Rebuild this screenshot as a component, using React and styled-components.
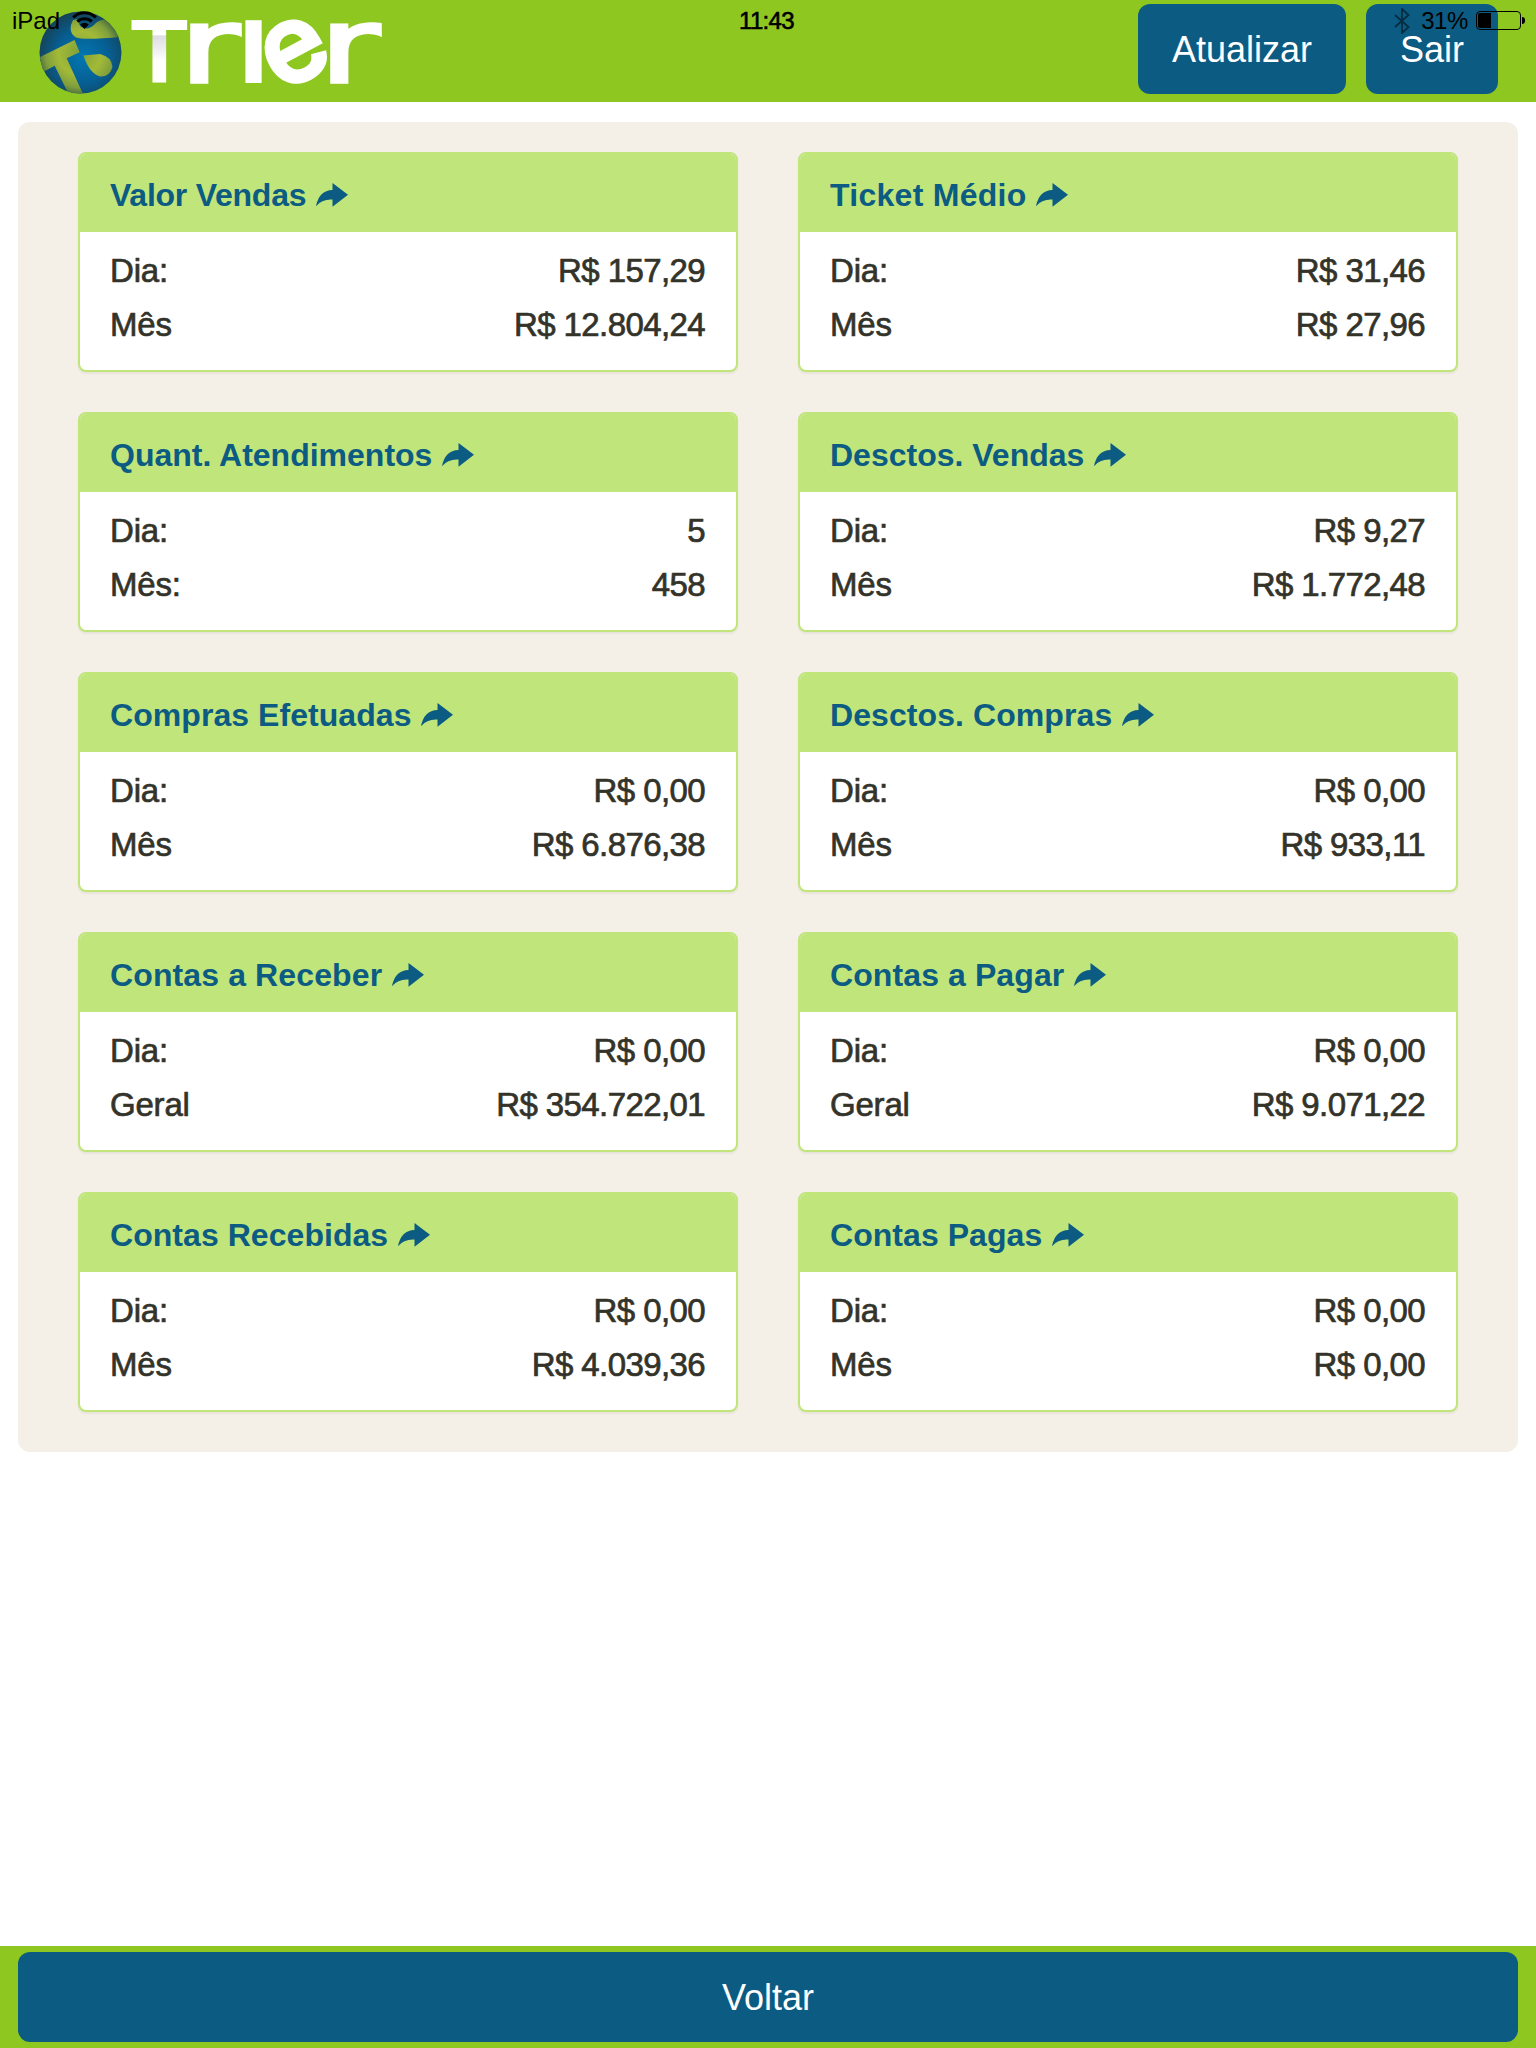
import React from "react";
import styled, { createGlobalStyle } from "styled-components";

const cards = [
  { title: "Valor Vendas", spacing: "-0.25px", rows: [["Dia:", "R$ 157,29"], ["Mês", "R$ 12.804,24"]] },
  { title: "Ticket Médio", spacing: "0.28px", rows: [["Dia:", "R$ 31,46"], ["Mês", "R$ 27,96"]] },
  { title: "Quant. Atendimentos", rows: [["Dia:", "5"], ["Mês:", "458"]] },
  { title: "Desctos. Vendas", rows: [["Dia:", "R$ 9,27"], ["Mês", "R$ 1.772,48"]] },
  { title: "Compras Efetuadas", spacing: "0.06px", rows: [["Dia:", "R$ 0,00"], ["Mês", "R$ 6.876,38"]] },
  { title: "Desctos. Compras", spacing: "0.08px", rows: [["Dia:", "R$ 0,00"], ["Mês", "R$ 933,11"]] },
  { title: "Contas a Receber", spacing: "0.12px", rows: [["Dia:", "R$ 0,00"], ["Geral", "R$ 354.722,01"]] },
  { title: "Contas a Pagar", spacing: "0.1px", rows: [["Dia:", "R$ 0,00"], ["Geral", "R$ 9.071,22"]] },
  { title: "Contas Recebidas", spacing: "0.05px", rows: [["Dia:", "R$ 0,00"], ["Mês", "R$ 4.039,36"]] },
  { title: "Contas Pagas", spacing: "0.05px", rows: [["Dia:", "R$ 0,00"], ["Mês", "R$ 0,00"]] },
];

const Logo = () => (
  <LogoSvg viewBox="0 0 350 90" aria-label="Trier">
    <defs>
      <radialGradient id="sea" cx="0.5" cy="0.58" r="0.54">
        <stop offset="0" stopColor="#0277b0" />
        <stop offset="0.55" stopColor="#065e92" />
        <stop offset="1" stopColor="#173f50" />
      </radialGradient>
      <radialGradient id="land" gradientUnits="userSpaceOnUse" cx="42" cy="48" r="43">
        <stop offset="0" stopColor="#7f9f38" />
        <stop offset="0.5" stopColor="#a3ba38" />
        <stop offset="0.8" stopColor="#809f3c" />
        <stop offset="1" stopColor="#45683f" />
      </radialGradient>
      <linearGradient id="fold" gradientUnits="userSpaceOnUse" x1="0" y1="-63" x2="0" y2="0">
        <stop offset="0.24" stopColor="#ffffff" />
        <stop offset="0.25" stopColor="#dcdce2" />
        <stop offset="0.65" stopColor="#ffffff" />
      </linearGradient>
      <clipPath id="globe">
        <circle cx="42.5" cy="47.5" r="41" />
      </clipPath>
    </defs>
    <g clipPath="url(#globe)">
      <rect width="90" height="90" fill="url(#sea)" />
      <g fill="url(#land)">
        <path d="M0 53 36.5 35 41.7 47.3 28.7 53.3 45.5 90H31L16.7 60.7 5 67z" />
        <path d="M45.5 50.5 62 49Q74 52 74.5 62Q72 72 62 71.5Q51 68 45.5 50.5z" />
        <path d="M35 15Q29 27 38 32.5Q46 35.5 86 31.5L78 14Q64 13 58 18Q52 25 46 23Q40 22 41 14z" />
      </g>
    </g>
    <LogoLetter $fill="url(#fold)" fontSize="91.6" transform="translate(92.5 78) scale(1.03 1)">
      T
    </LogoLetter>
    <ArchLetter fontSize="104" transform="translate(141.5 77) scale(1.4 1)">r</ArchLetter>
    <LogoLetter fontSize="91.6" transform="translate(200 78) scale(1.22 1)">I</LogoLetter>
    <RoundLetter fontSize="107" textAnchor="middle" transform="translate(256.5 46.5) rotate(-28) translate(0 29.5)">
      e
    </RoundLetter>
    <ArchLetter fontSize="104" transform="translate(281.5 77) scale(1.4 1)">r</ArchLetter>
  </LogoSvg>
);

const ShareArrow = () => (
  <ArrowSvg viewBox="0 0 32 24">
    <path d="M16.5 0 32 11.8 16.5 23.8V16.6Q6 16 0 23.2Q3 7.5 16.5 7z" />
  </ArrowSvg>
);

const StatusBar = () => (
  <Status>
    <StatusSide>
      iPad
      <svg width="25" height="19" viewBox="0 0 25 19">
        <g fill="none" stroke="#000" strokeWidth="3">
          <path d="M1.2 6.5A16 16 0 0 1 23.8 6.5" />
          <path d="M5.3 10.7A10.4 10.4 0 0 1 19.7 10.7" />
        </g>
        <path d="M8.2 13.5A6 6 0 0 1 16.8 13.5L12.5 18z" />
      </svg>
    </StatusSide>
    <Clock>11:43</Clock>
    <StatusSide $right>
      <svg width="16" height="26" viewBox="0 0 16 26" fill="none" stroke="#000" strokeWidth="1.8" opacity="0.5">
        <path d="M1 7 14.5 19 8 25V1L14.5 7 1 19" />
      </svg>
      <Percent>31%</Percent>
      <Battery>
        <Charge style={{ width: "32%" }} />
      </Battery>
    </StatusSide>
  </Status>
);

const Card = ({ title, spacing, rows }) => (
  <CardBox>
    <CardTitle $spacing={spacing}>
      <span>{title}</span>
      <ShareArrow />
    </CardTitle>
    <CardBody>
      {rows.map(([label, value]) => (
        <Row key={label}>
          <Label>{label}</Label>
          <Value>{value}</Value>
        </Row>
      ))}
    </CardBody>
  </CardBox>
);

const App = () => {
  return (
    <Page>
      <GlobalStyle />
      <Header>
        <Logo />
        <Actions>
          <Button $width="208px">Atualizar</Button>
          <Button $width="132px">Sair</Button>
        </Actions>
        <StatusBar />
      </Header>
      <Main>
        <Panel>
          {cards.map((card) => (
            <Card key={card.title} {...card} />
          ))}
        </Panel>
      </Main>
      <Footer>
        <Button $width="100%">Voltar</Button>
      </Footer>
    </Page>
  );
};

export default App;

const GlobalStyle = createGlobalStyle`
  * {
    box-sizing: border-box;
  }
  body {
    margin: 0;
    background-color: #ffffff;
    font-family: "Liberation Sans", Arial, sans-serif;
  }
`;
const Page = styled.div`
  display: flex;
  flex-direction: column;
  width: 100%;
  height: 100vh;
`;
const Header = styled.header`
  position: relative;
  display: flex;
  align-items: flex-start;
  justify-content: space-between;
  height: 102px;
  padding: 4px 38px 0;
  background-color: #8fc721;
`;
const LogoSvg = styled.svg`
  width: 350px;
  height: 90px;
  margin-top: 1px;
  overflow: visible;
`;
const LogoLetter = styled.text`
  font-family: "Liberation Sans", Arial, sans-serif;
  font-weight: 700;
  fill: ${({ $fill }) => $fill || "#ffffff"};
`;
const RoundLetter = styled.text`
  font-family: Inter, "Liberation Sans", sans-serif;
  font-weight: 500;
  fill: #ffffff;
  stroke: #ffffff;
  stroke-width: 4.5px;
`;
const ArchLetter = styled(RoundLetter)`
  font-family: "DejaVu Sans", sans-serif;
  font-weight: 400;
  stroke-width: 3.5px;
`;
const Actions = styled.div`
  display: flex;
  gap: 20px;
`;
const Button = styled.button`
  width: ${({ $width }) => $width};
  height: 90px;
  padding: 2px 0 0;
  border: 0;
  border-radius: 12px;
  background-color: #0c5b82;
  color: #ffffff;
  font-family: inherit;
  font-size: 36px;
  cursor: pointer;
`;
const Status = styled.div`
  position: absolute;
  top: 0;
  left: 0;
  display: grid;
  grid-template-columns: 1fr auto 1fr;
  align-items: center;
  width: 100%;
  height: 41px;
  padding: 0 11px 0 12px;
  color: #000000;
  font-size: 24px;
  pointer-events: none;
`;
const StatusSide = styled.div`
  display: flex;
  align-items: center;
  justify-content: ${({ $right }) => ($right ? "flex-end" : "flex-start")};
  gap: ${({ $right }) => ($right ? "8px" : "12px")};
`;
const Clock = styled.div`
  padding-right: 4px;
  font-size: 24px;
  letter-spacing: -0.7px;
  -webkit-text-stroke: 0.6px #000000;
`;
const Percent = styled.span`
  margin-left: 3px;
  letter-spacing: -0.4px;
`;
const Battery = styled.div`
  position: relative;
  width: 45px;
  height: 19px;
  margin-right: 4px;
  padding: 1px;
  border: 1px solid #000000;
  border-radius: 4px;
  &::after {
    content: "";
    position: absolute;
    top: 5px;
    right: -5px;
    width: 3px;
    height: 7px;
    border-radius: 0 4px 4px 0;
    background-color: #000000;
  }
`;
const Charge = styled.div`
  height: 100%;
  border-radius: 2px 0 0 2px;
  background-color: #000000;
`;
const Main = styled.main`
  flex: 1;
  padding: 20px 18px 0;
`;
const Panel = styled.section`
  display: grid;
  grid-template-columns: 1fr 1fr;
  gap: 40px 60px;
  padding: 30px 60px 40px;
  border-radius: 12px;
  background-color: #f4f0e8;
`;
const CardBox = styled.article`
  height: 220px;
  overflow: hidden;
  border: 2px solid #c0e57b;
  border-radius: 8px;
  background-color: #ffffff;
  box-shadow: 0 2px 2px rgb(0 0 0 / 5%);
`;
const CardTitle = styled.h3`
  display: flex;
  align-items: center;
  gap: 9.5px;
  height: 78px;
  margin: 0;
  padding: 4px 30px 0;
  background-color: #c0e57b;
  color: #0c5b82;
  font-size: 32px;
  font-weight: 700;
  letter-spacing: ${({ $spacing }) => $spacing || "0"};
`;
const ArrowSvg = styled.svg`
  width: 32px;
  height: 24px;
  fill: #0c5b82;
`;
const CardBody = styled.div`
  padding: 12px 31px 0 30px;
`;
const Row = styled.div`
  display: flex;
  justify-content: space-between;
  color: #33332a;
  font-size: 33px;
  line-height: 54px;
  -webkit-text-stroke: 0.7px #33332a;
`;
const Label = styled.span`
  letter-spacing: -0.2px;
`;
const Value = styled.span`
  letter-spacing: -0.6px;
`;
const Footer = styled.footer`
  height: 102px;
  padding: 6px 18px;
  background-color: #8fc721;
`;
